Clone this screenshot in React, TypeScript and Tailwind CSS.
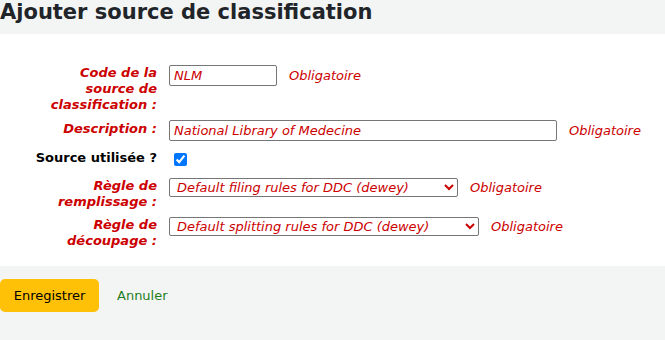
import React from "react";

const LABEL = "w-[157px] shrink-0 text-right font-bold italic text-[13px] leading-4 text-[#cc0000]";
const REQ = "ml-3 italic text-[13px] text-[#cc0000]";
const FIELD =
  "h-[21px] rounded-[2px] border border-[#767676] bg-white px-[4px] italic text-[13px] text-[#cc0000] outline-none";
const SELECT =
  "h-[19px] rounded-[2px] border border-[#767676] bg-white pl-[3px] italic text-[13px] leading-4 text-[#cc0000] outline-none";

export default function App() {
  return (
    <div className="h-[340px] w-[665px] bg-[#f3f4f4] font-['DejaVu_Sans',sans-serif] text-[#333]">
      <h1 className="h-[34px] text-[21px] font-bold leading-6 text-[#212529]">
        Ajouter source de classification
      </h1>

      <form className="bg-white pt-[31px] pb-[17px]">
        <div className="flex items-start">
          <label className={LABEL}>
            Code de la
            <br />
            source de
            <br />
            classification :
          </label>
          <div className="ml-3 flex items-center">
            <input className={FIELD + " w-[108px]"} defaultValue="NLM" />
            <span className={REQ}>Obligatoire</span>
          </div>
        </div>

        <div className="mt-[7px] flex items-start">
          <label className={LABEL + " pt-[1px]"}>Description :</label>
          <div className="ml-3 flex items-center">
            <input className={FIELD + " w-[388px]"} defaultValue="National Library of Medecine" />
            <span className={REQ}>Obligatoire</span>
          </div>
        </div>

        <div className="mt-[7px] flex h-[24px] items-start">
          <label className="w-[157px] shrink-0 pt-[2px] text-right text-[13px] font-bold leading-4 text-black">
            Source utilisée ?
          </label>
          <input
            type="checkbox"
            defaultChecked
            className="ml-[17px] mt-[5px] h-[13px] w-[13px] accent-[#0075ff]"
          />
        </div>

        <div className="mt-[6px] flex items-start">
          <label className={LABEL}>
            Règle de
            <br />
            remplissage :
          </label>
          <div className="ml-3 flex items-center">
            <select className={SELECT + " w-[289px]"} defaultValue="ddc">
              <option value="ddc">Default filing rules for DDC (dewey)</option>
            </select>
            <span className={REQ}>Obligatoire</span>
          </div>
        </div>

        <div className="mt-[7px] flex items-start">
          <label className={LABEL}>
            Règle de
            <br />
            découpage :
          </label>
          <div className="ml-3 flex items-center">
            <select className={SELECT + " w-[310px]"} defaultValue="ddc">
              <option value="ddc">Default splitting rules for DDC (dewey)</option>
            </select>
            <span className={REQ}>Obligatoire</span>
          </div>
        </div>
      </form>

      <div className="flex items-center pt-[13px]">
        <button
          type="button"
          className="h-[33px] w-[99px] rounded-[5px] bg-[#ffc107] text-[13px] text-black"
        >
          Enregistrer
        </button>
        <a href="#" className="ml-[18px] text-[13px] text-[#1e7e1e]">
          Annuler
        </a>
      </div>
    </div>
  );
}
